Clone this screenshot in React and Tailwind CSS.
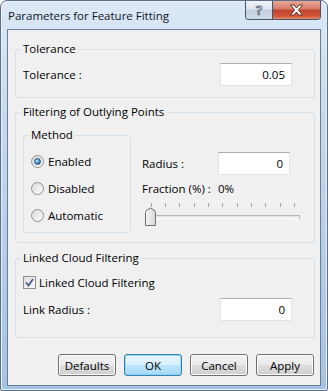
import React, { useState } from 'react';

function GroupBox({ title, className, children }) {
  return (
    <div className={`relative border border-[#d5dfe5] rounded-[3px] ${className}`}>
      <span className="absolute left-[5px] -top-[9px] px-[2px] leading-[15px] bg-[#f0f0f0]">
        {title}
      </span>
      {children}
    </div>
  );
}

function TextBox({ value }) {
  return (
    <div className="w-[72px] h-[23px] bg-white border border-[#dfe3ea] border-t-[#abadb3] flex items-center justify-end pr-[6px]">
      {value}
    </div>
  );
}

function Radio({ checked, label }) {
  return (
    <div className="flex items-center h-[14px] gap-[4px]">
      <div className="w-[13px] h-[13px] rounded-full border border-[#8f8f8f] bg-[linear-gradient(135deg,#dcdcdc,#fbfbfb)] flex items-center justify-center">
        {checked && (
          <div className="w-[7px] h-[7px] rounded-full border border-[#1c5180] bg-[radial-gradient(circle_at_35%_35%,#bfe6fb,#3d8fd1_55%,#0f4f8a)]" />
        )}
      </div>
      <span>{label}</span>
    </div>
  );
}

function Button({ label, primary }) {
  const look = primary
    ? 'border-[#3c7fb1] bg-[linear-gradient(180deg,#eaf6fd_0%,#d9f0fc_50%,#bee6fd_51%,#a7d9f5_100%)] shadow-[inset_0_0_0_1px_#8ed6fa]'
    : 'border-[#707070] bg-[linear-gradient(180deg,#f2f2f2_0%,#ebebeb_50%,#dddddd_51%,#cfcfcf_100%)] shadow-[inset_0_0_0_1px_#fcfcfc]';
  return (
    <button className={`w-[58px] h-[22px] rounded-[3px] border flex items-center justify-center ${look}`}>
      {label}
    </button>
  );
}

function Slider() {
  const ticks = [];
  for (let i = 0; i < 11; i++) ticks.push(5.5 + i * 14.35);
  return (
    <svg width="156" height="25" viewBox="0 0 156 25" className="ml-[3px] mt-[5px] block">
      {ticks.map((x) => (
        <line key={x} x1={Math.round(x) + 0.5} y1="2" x2={Math.round(x) + 0.5} y2="6" stroke="#a4a4a4" />
      ))}
      <rect x="0.5" y="14.5" width="154" height="3" fill="#e7eaea" stroke="#b8b8b8" />
      <line x1="1" y1="17.5" x2="154" y2="17.5" stroke="#ffffff" />
      <defs>
        <linearGradient id="thumb" x1="0" y1="0" x2="1" y2="0">
          <stop offset="0" stopColor="#f6f6f6" />
          <stop offset="1" stopColor="#d6d6d6" />
        </linearGradient>
      </defs>
      <path d="M0.5 24.5 V11.5 Q0.5 10 2 9 L5.5 7 L9 9 Q10.5 10 10.5 11.5 V24.5 Z" fill="url(#thumb)" stroke="#6f6f6f" />
    </svg>
  );
}

function App() {
  const [linked, setLinked] = useState(true);

  return (
    <div className="w-[328px] h-[391px] font-['Segoe_UI','Open_Sans',sans-serif] text-[11.5px] text-black leading-[15px] flex flex-col rounded-t-[7px] rounded-b-[2px] border border-[#5d6f86] bg-[linear-gradient(180deg,#dce8f5_0%,#c6daef_30%,#b2cce9_70%,#a5c3e4_100%)] shadow-[inset_0_0_0_1px_#e8f1fa]">
      {/* title bar */}
      <div className="h-[28px] flex items-start justify-between pl-[7px] pr-[6px]">
        <span className="mt-[7px] text-[#10161e]">Parameters for Feature Fitting</span>
        <div className="flex h-[19px] rounded-b-[4px] border border-t-0 border-[#45556a] overflow-hidden">
          <div className="w-[27px] flex items-center justify-center bg-[linear-gradient(180deg,#eef3f8_0%,#dfe7f0_45%,#c3cfdc_50%,#cfdbe7_100%)] border-r border-[#45556a]">
            <span className="font-bold text-[13px] text-white [-webkit-text-stroke:0.8px_#4d5866]">?</span>
          </div>
          <div className="w-[47px] flex items-center justify-center bg-[linear-gradient(180deg,#e8a596_0%,#d67a68_45%,#c3452e_50%,#d0583b_85%,#e88a6a_100%)]">
            <svg width="15" height="12" viewBox="0 0 15 12">
              <path d="M1.5 1 L5 1 L7.5 4 L10 1 L13.5 1 L9.5 6 L13.5 11 L10 11 L7.5 8 L5 11 L1.5 11 L5.5 6 Z" fill="#ffffff" stroke="#5a2219" strokeWidth="0.9" strokeLinejoin="round" />
            </svg>
          </div>
        </div>
      </div>

      {/* client area */}
      <div className="mx-[6px] flex-1 mb-[4px] bg-[#f0f0f0] border border-[#6e7e91] flex flex-col pl-[7px] pr-[5px]">
        <GroupBox title="Tolerance" className="mt-[19px] flex items-center justify-between pl-[7px] pr-[22px] pt-[13px] pb-[11px]">
          <span>Tolerance :</span>
          <TextBox value="0.05" />
        </GroupBox>

        <GroupBox title="Filtering of Outlying Points" className="mt-[14px] flex items-start pl-[7px] pt-[22px] pb-[9px]">
          <GroupBox title="Method" className="w-[108px] h-[98px] flex flex-col gap-[13px] pl-[7px] pt-[18px]">
            <Radio checked label="Enabled" />
            <Radio label="Disabled" />
            <Radio label="Automatic" />
          </GroupBox>
          <div className="ml-[11px] mt-[17px] w-[148px] flex flex-col">
            <div className="h-[23px] flex items-center justify-between">
              <span>Radius :</span>
              <TextBox value="0" />
            </div>
            <div className="mt-[6px] flex">
              <span className="w-[76px] shrink-0">Fraction (%) :</span>
              <span>0%</span>
            </div>
            <Slider />
          </div>
        </GroupBox>

        <GroupBox title="Linked Cloud Filtering" className="mt-[15px] flex flex-col pl-[7px] pr-[22px] pt-[17px] pb-[16px]">
          <label className="h-[13px] flex items-center gap-[3px]" onClick={() => setLinked(!linked)}>
            <div className="w-[13px] h-[13px] border border-[#8f8f8f] bg-[linear-gradient(135deg,#dcdcdc,#fbfbfb)] flex items-center justify-center">
              {linked && (
                <svg width="9" height="9" viewBox="0 0 9 9">
                  <path d="M1 4.5 L3.5 7.5 L8 1" fill="none" stroke="#4a5f97" strokeWidth="1.8" />
                </svg>
              )}
            </div>
            <span>Linked Cloud Filtering</span>
          </label>
          <div className="mt-[9px] h-[23px] flex items-center justify-between">
            <span>Link Radius :</span>
            <TextBox value="0" />
          </div>
        </GroupBox>

        <div className="mt-[16px] flex justify-end gap-[8px] pr-[1px]">
          <Button label="Defaults" />
          <Button label="OK" primary />
          <Button label="Cancel" />
          <Button label="Apply" />
        </div>
      </div>
    </div>
  );
}

export default App;
